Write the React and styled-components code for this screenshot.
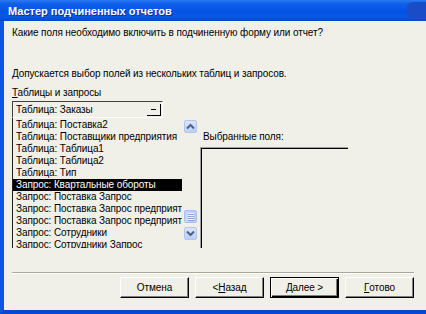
import styled, { createGlobalStyle } from "styled-components";

const GlobalStyle = createGlobalStyle`
  html, body {
    margin: 0;
    padding: 0;
    background: #f1f0e8;
  }
  body {
    font-family: "Liberation Sans", Arial, sans-serif;
    font-size: 10px;
    letter-spacing: -0.1px;
    color: #000;
  }
`;

const items = [
  "Таблица: Поставка2",
  "Таблица: Поставщики предприятия",
  "Таблица: Таблица1",
  "Таблица: Таблица2",
  "Таблица: Тип",
  "Запрос: Квартальные обороты",
  "Запрос: Поставка Запрос",
  "Запрос: Поставка Запрос предприятия",
  "Запрос: Поставка Запрос предприятия",
  "Запрос: Сотрудники",
  "Запрос: Сотрудники Запрос",
];

const SELECTED = 5;

const Chevron = ({ up }) => (
  <svg width="9" height="7" viewBox="0 0 9 7">
    <path
      d={up ? "M1 5.5 L4.5 2 L8 5.5" : "M1 1.5 L4.5 5 L8 1.5"}
      fill="none"
      stroke="#4d6185"
      strokeWidth="2"
    />
  </svg>
);

export default function App() {
  return (
    <>
      <GlobalStyle />
      <Window>
        <TitleBar>
          <Title>Мастер подчиненных отчетов</Title>
          <CloseBlob />
        </TitleBar>
        <Frame>
          <Text>Какие поля необходимо включить в подчиненную форму или отчет?</Text>
          <Text gap={28}>Допускается выбор полей из нескольких таблиц и запросов.</Text>
          <Text gap={6}>
            <u>Т</u>аблицы и запросы
          </Text>
          <Row>
            <LeftCol>
              <Combo>
                <span>Таблица: Заказы</span>
                <ComboButton>
                  <Dash />
                </ComboButton>
              </Combo>
              <List>
                <Items>
                  {items.map((it, i) => (
                    <Item key={i} selected={i === SELECTED}>
                      {it}
                    </Item>
                  ))}
                </Items>
                <ScrollBar>
                  <ScrollBtn>
                    <Chevron up />
                  </ScrollBtn>
                  <Track />
                  <Thumb>
                    <Grip />
                    <Grip />
                    <Grip />
                    <Grip />
                  </Thumb>
                  <ScrollBtn spaced>
                    <Chevron />
                  </ScrollBtn>
                </ScrollBar>
              </List>
            </LeftCol>
            <RightCol>
              <Label>Выбранные поля:</Label>
              <SunkenBox />
            </RightCol>
          </Row>
          <Separator />
          <Buttons>
            <Button>Отмена</Button>
            <Button>
              &lt; <u>Н</u>азад
            </Button>
            <Button primary>
              <u>Д</u>алее &gt;
            </Button>
            <Button>
              <u>Г</u>отово
            </Button>
          </Buttons>
        </Frame>
      </Window>
    </>
  );
}

const Window = styled.div`
  width: 426px;
  height: 314px;
  display: flex;
  flex-direction: column;
  background: #f1f0e8;
  overflow: hidden;
`;

const TitleBar = styled.div`
  height: 21px;
  flex: none;
  display: flex;
  align-items: center;
  justify-content: space-between;
  padding-left: 8px;
  background: linear-gradient(
    to bottom,
    #2b7af0 0%,
    #0d5fea 20%,
    #0453e2 55%,
    #0a58e6 80%,
    #0446d0 100%
  );
`;

const Title = styled.span`
  color: #fff;
  font-family: "Liberation Sans", Arial, sans-serif;
  font-weight: bold;
  font-size: 11px;
  letter-spacing: 0;
  text-shadow: 1px 1px 0 #0b2e9a;
`;

const CloseBlob = styled.span`
  width: 20px;
  height: 17px;
  border-radius: 8px 0 0 8px;
  background: #1a4cc8;
`;

const Frame = styled.div`
  flex: 1;
  display: flex;
  flex-direction: column;
  border-left: 4px solid #0a56e2;
  border-bottom: 4px solid #0846d4;
  padding: 5px 12px 0 8px;
`;

const Text = styled.div`
  line-height: 13px;
  margin-top: ${({ gap }) => gap || 0}px;
  white-space: nowrap;
`;

const Row = styled.div`
  display: flex;
  gap: 3px;
  margin-top: 2px;
`;

const LeftCol = styled.div`
  width: 185px;
  display: flex;
  flex-direction: column;
`;

const Combo = styled.div`
  width: 151px;
  height: 17px;
  box-sizing: border-box;
  display: flex;
  align-items: center;
  justify-content: space-between;
  padding: 0 1px 0 3px;
  border-top: 1px solid #404040;
  border-left: 1px solid #404040;
  border-right: 1px solid #fff;
  border-bottom: 1px solid #fff;
  white-space: nowrap;
`;

const ComboButton = styled.span`
  width: 14px;
  height: 12px;
  box-sizing: border-box;
  display: flex;
  align-items: center;
  justify-content: center;
  border-right: 1px solid #000;
  border-bottom: 1px solid #000;
`;

const Dash = styled.span`
  width: 5px;
  height: 1px;
  background: #000;
`;

const List = styled.div`
  height: 130px;
  display: flex;
  border-left: 1px solid #202020;
  overflow: hidden;
`;

const Items = styled.div`
  width: 169px;
  flex: none;
  padding-top: 1px;
  overflow: hidden;
`;

const Item = styled.div`
  height: 12px;
  line-height: 12px;
  padding-left: 3px;
  white-space: nowrap;
  overflow: hidden;
  background: ${({ selected }) => (selected ? "#000" : "transparent")};
  color: ${({ selected }) => (selected ? "#fff" : "#000")};
`;

const ScrollBar = styled.div`
  width: 13px;
  margin-left: 2px;
  display: flex;
  flex-direction: column;
  padding-top: 2px;
`;

const ScrollBtn = styled.div`
  height: 13px;
  box-sizing: border-box;
  display: flex;
  align-items: center;
  justify-content: center;
  margin-top: ${({ spaced }) => (spaced ? 4 : 0)}px;
  background: linear-gradient(to bottom, #dbe6fd, #bccff9);
  border: 1px solid #b3c5ee;
  border-radius: 2px;
`;

const Track = styled.div`
  height: 77px;
`;

const Thumb = styled.div`
  height: 13px;
  box-sizing: border-box;
  display: flex;
  flex-direction: column;
  align-items: center;
  justify-content: center;
  gap: 1px;
  background: linear-gradient(to right, #c9d8fc, #b7cbf7);
  border: 1px solid #aabfe9;
  border-radius: 2px;
`;

const Grip = styled.span`
  width: 6px;
  height: 1px;
  background: #eef3fe;
  box-shadow: 0 1px 0 #8ca4d8;
`;

const RightCol = styled.div`
  display: flex;
  flex-direction: column;
  padding-top: 29px;
`;

const Label = styled.div`
  line-height: 13px;
  padding-left: 3px;
`;

const SunkenBox = styled.div`
  width: 148px;
  height: 101px;
  margin-top: 4px;
  box-sizing: border-box;
  border-top: 1px solid #a0a0a0;
  border-left: 1px solid #a0a0a0;
  box-shadow: inset 1px 1px 0 #000;
`;

const Separator = styled.div`
  margin-top: 24px;
  height: 0;
  border-top: 1px solid #aca899;
  border-bottom: 1px solid #fff;
`;

const Buttons = styled.div`
  display: flex;
  justify-content: flex-end;
  gap: 6px;
  margin-top: 3px;
`;

const Button = styled.div`
  width: 69px;
  height: 21px;
  box-sizing: border-box;
  display: flex;
  align-items: center;
  justify-content: center;
  white-space: nowrap;
  border: 1px solid;
  border-color: ${({ primary }) => (primary ? "#000" : "#fff #000 #000 #fff")};
  box-shadow: ${({ primary }) =>
    primary
      ? "inset 1px 1px 0 #fff, inset -1px -1px 0 #000, inset -2px -2px 0 #808080"
      : "inset -1px -1px 0 #808080"};
`;
